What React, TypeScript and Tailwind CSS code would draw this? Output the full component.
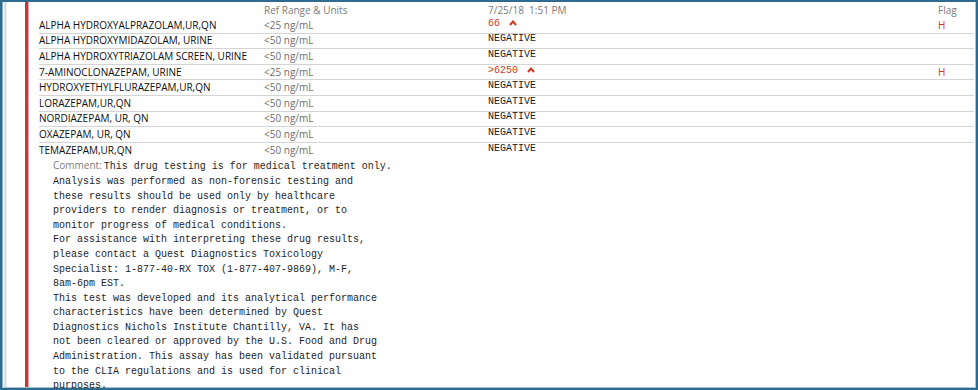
import React from "react";

type Row = { name: string; range: string; result: string; high?: boolean };

const rows: Row[] = [
  { name: "ALPHA HYDROXYALPRAZOLAM,UR,QN", range: "<25 ng/mL", result: "66", high: true },
  { name: "ALPHA HYDROXYMIDAZOLAM, URINE", range: "<50 ng/mL", result: "NEGATIVE" },
  { name: "ALPHA HYDROXYTRIAZOLAM SCREEN, URINE", range: "<50 ng/mL", result: "NEGATIVE" },
  { name: "7-AMINOCLONAZEPAM, URINE", range: "<25 ng/mL", result: ">6250", high: true },
  { name: "HYDROXYETHYLFLURAZEPAM,UR,QN", range: "<50 ng/mL", result: "NEGATIVE" },
  { name: "LORAZEPAM,UR,QN", range: "<50 ng/mL", result: "NEGATIVE" },
  { name: "NORDIAZEPAM, UR, QN", range: "<50 ng/mL", result: "NEGATIVE" },
  { name: "OXAZEPAM, UR, QN", range: "<50 ng/mL", result: "NEGATIVE" },
  { name: "TEMAZEPAM,UR,QN", range: "<50 ng/mL", result: "NEGATIVE" },
];

const commentLines = [
  "Analysis was performed as non-forensic testing and",
  "these results should be used only by healthcare",
  "providers to render diagnosis or treatment, or to",
  "monitor progress of medical conditions.",
  "For assistance with interpreting these drug results,",
  "please contact a Quest Diagnostics Toxicology",
  "Specialist: 1-877-40-RX TOX (1-877-407-9869), M-F,",
  "8am-6pm EST.",
  "This test was developed and its analytical performance",
  "characteristics have been determined by Quest",
  "Diagnostics Nichols Institute Chantilly, VA. It has",
  "not been cleared or approved by the U.S. Food and Drug",
  "Administration. This assay has been validated pursuant",
  "to the CLIA regulations and is used for clinical",
  "purposes.",
];

const ui = "font-['Open_Sans',sans-serif]";
const mono = "font-['Liberation_Mono',monospace]";

function Caret() {
  return (
    <svg width="8" height="6" viewBox="0 0 8 6" className="ml-[9px] mt-[-1px]">
      <polyline points="1,5 4,1.5 7,5" fill="none" stroke="#cc3a1f" strokeWidth="2" />
    </svg>
  );
}

export default function App() {
  return (
    <div className="w-[978px] h-[390px] overflow-hidden bg-white border-2 border-[#2f6b8d]">
      <div className="flex h-full border-r border-b border-[#a8c3d3]">
        {/* left gutter */}
        <div className="flex h-full w-[23px] shrink-0">
          <div className="w-px bg-[#8fb0c4]" />
          <div className="w-[2px] bg-[#e8eef2]" />
          <div className="w-px bg-[#d2d2d2]" />
          <div className="w-px bg-[#ececec]" />
          <div className="flex-1 bg-white" />
        </div>
        <div className="w-[3px] shrink-0 bg-[#c23a3b]" />
        <div className="w-px shrink-0 bg-[#e2a4a4]" />

        {/* content */}
        <div className={`flex-1 pl-[10px] pr-[1px] ${ui} text-[10px]`}>
          <div className="flex h-[16px] items-center text-[#7b7b7b]">
            <div className="w-[225px] shrink-0" />
            <div className="w-[224px] shrink-0">Ref Range &amp; Units</div>
            <div className="w-[450px] shrink-0">7/25/18&nbsp;&nbsp;1:51 PM</div>
            <div>Flag</div>
          </div>
          {rows.map((r, i) => (
            <div
              key={r.name}
              className={`flex h-[15.6px] items-center ${
                i < rows.length - 1 ? "border-b border-[#d4d4d4]" : ""
              }`}
            >
              <div className="w-[225px] shrink-0 text-[#0d0d0d] whitespace-nowrap">{r.name}</div>
              <div className="w-[224px] shrink-0 text-[#6e6e6e]">{r.range}</div>
              <div
                className={`w-[450px] shrink-0 flex items-center ${mono} text-[10px] mb-[4px] ${
                  r.high ? "text-[#cc3a1f]" : "text-[#1a1a1a]"
                }`}
              >
                <span>{r.result}</span>
                {r.high && <Caret />}
              </div>
              <div className="text-[#dc3128]">{r.high ? "H" : ""}</div>
            </div>
          ))}
          <div className="pl-[14px] leading-[14.6px] text-[10px] text-[#1e1e1e]">
            <div className="whitespace-pre">
              <span className={`${ui} text-[#7b7b7b]`}>Comment:</span>
              <span className={`${mono} ml-[2px]`}>This drug testing is for medical treatment only.</span>
            </div>
            {commentLines.map((l, i) => (
              <div key={i} className={`${mono} whitespace-pre`}>
                {l}
              </div>
            ))}
          </div>
        </div>
      </div>
    </div>
  );
}
